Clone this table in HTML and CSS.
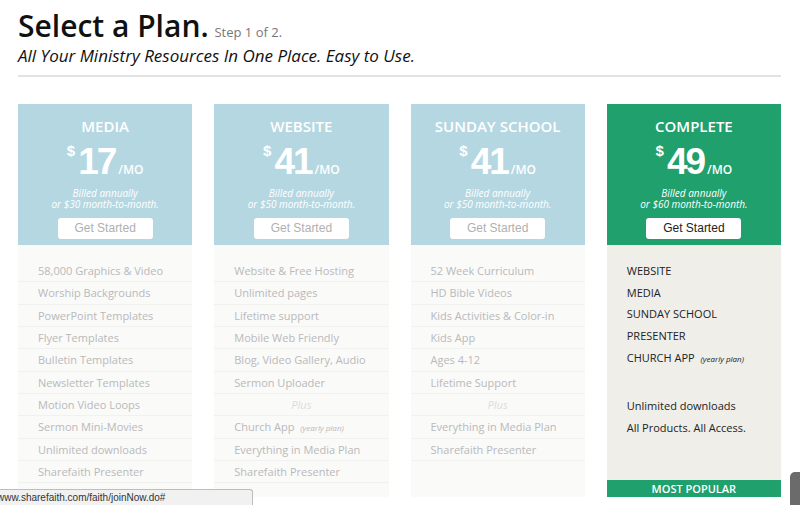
FILE: index.html
```html
<!DOCTYPE html>
<html lang="en">
<head>
    <meta charset="UTF-8">
    <title>Select a Plan</title>
    <link rel="stylesheet" href="styles.css">
</head>
<body>
    <div class="page">
        <h1 class="title">Select a Plan. <span class="step">Step 1 of 2.</span></h1>
        <p class="subtitle">All Your Ministry Resources In One Place. Easy to Use.</p>
        <hr class="rule">

        <div class="plans">
            <div class="plan">
                <div class="plan-head">
                    <h2>MEDIA</h2>
                    <div class="price"><span class="cur">$</span><span class="amt">17</span><span class="per">/MO</span></div>
                    <p class="billed">Billed annually<br>or $30 month-to-month.</p>
                    <a href="#" class="btn">Get Started</a>
                </div>
                <ul class="features">
                    <li>58,000 Graphics &amp; Video</li>
                    <li>Worship Backgrounds</li>
                    <li>PowerPoint Templates</li>
                    <li>Flyer Templates</li>
                    <li>Bulletin Templates</li>
                    <li>Newsletter Templates</li>
                    <li>Motion Video Loops</li>
                    <li>Sermon Mini-Movies</li>
                    <li>Unlimited downloads</li>
                    <li>Sharefaith Presenter</li>
                </ul>
            </div>

            <div class="plan">
                <div class="plan-head">
                    <h2>WEBSITE</h2>
                    <div class="price"><span class="cur">$</span><span class="amt">41</span><span class="per">/MO</span></div>
                    <p class="billed">Billed annually<br>or $50 month-to-month.</p>
                    <a href="#" class="btn">Get Started</a>
                </div>
                <ul class="features">
                    <li>Website &amp; Free Hosting</li>
                    <li>Unlimited pages</li>
                    <li>Lifetime support</li>
                    <li>Mobile Web Friendly</li>
                    <li>Blog, Video Gallery, Audio</li>
                    <li>Sermon Uploader</li>
                    <li class="plus">Plus</li>
                    <li>Church App <em class="note">(yearly plan)</em></li>
                    <li>Everything in Media Plan</li>
                    <li>Sharefaith Presenter</li>
                </ul>
            </div>

            <div class="plan">
                <div class="plan-head">
                    <h2>SUNDAY SCHOOL</h2>
                    <div class="price"><span class="cur">$</span><span class="amt">41</span><span class="per">/MO</span></div>
                    <p class="billed">Billed annually<br>or $50 month-to-month.</p>
                    <a href="#" class="btn">Get Started</a>
                </div>
                <ul class="features">
                    <li>52 Week Curriculum</li>
                    <li>HD Bible Videos</li>
                    <li>Kids Activities &amp; Color-in</li>
                    <li>Kids App</li>
                    <li>Ages 4-12</li>
                    <li>Lifetime Support</li>
                    <li class="plus">Plus</li>
                    <li>Everything in Media Plan</li>
                    <li>Sharefaith Presenter</li>
                </ul>
            </div>

            <div class="plan plan-complete">
                <div class="plan-head">
                    <h2>COMPLETE</h2>
                    <div class="price"><span class="cur">$</span><span class="amt">49</span><span class="per">/MO</span></div>
                    <p class="billed">Billed annually<br>or $60 month-to-month.</p>
                    <a href="#" class="btn">Get Started</a>
                </div>
                <ul class="features">
                    <li>WEBSITE</li>
                    <li>MEDIA</li>
                    <li>SUNDAY SCHOOL</li>
                    <li>PRESENTER</li>
                    <li>CHURCH APP <em class="note">(yearly plan)</em></li>
                    <li class="spacer"></li>
                    <li>Unlimited downloads</li>
                    <li>All Products. All Access.</li>
                </ul>
                <div class="popular">MOST POPULAR</div>
            </div>
        </div>
    </div>

    <div class="statusbar">www.sharefaith.com/faith/joinNow.do#</div>
    <div class="side-tab"></div>
</body>
</html>
```

FILE: styles.css
```css
body {
    margin: 0;
    font-family: "Open Sans", Arial, sans-serif;
    color: #111;
    background: #fff;
}
.page {
    padding: 8px 19px 0 18px;
}
.title {
    margin: 0;
    font-size: 30px;
    font-weight: 600;
    line-height: 36px;
    color: #111;
}
.step {
    font-size: 13px;
    font-weight: 400;
    line-height: 1;
    color: #777;
    margin-left: -2px;
}
.subtitle {
    margin: 0;
    font-size: 17px;
    font-style: italic;
    line-height: 24px;
    color: #111;
}
.rule {
    margin: 7px 0 0;
    border: 0;
    border-top: 2px solid #e2e2e2;
}
.plans {
    display: grid;
    grid-template-columns: repeat(4, 1fr);
    gap: 22px;
    margin-top: 27px;
}
.plan {
    height: 393px;
    display: flex;
    flex-direction: column;
    background: #fafaf9;
}
.plan-head {
    height: 141px;
    background: #b5d7e2;
    color: #fff;
    text-align: center;
    box-sizing: border-box;
    padding-top: 12px;
}
.plan-head h2 {
    margin: 0;
    font-size: 15px;
    font-weight: 600;
    line-height: 20px;
}
.price {
    margin-top: 9px;
    height: 34px;
    line-height: 34px;
    display: flex;
    justify-content: center;
    align-items: flex-start;
}
.cur {
    font-family: "Liberation Sans", Arial, sans-serif;
    font-weight: 700;
    font-size: 15px;
    line-height: 20px;
    margin-right: 3px;
    margin-top: -4px;
}
.amt {
    font-family: "Liberation Sans", Arial, sans-serif;
    font-weight: 700;
    font-size: 37px;
    line-height: 34px;
    letter-spacing: -2px;
}
.per {
    font-size: 12px;
    font-weight: 600;
    line-height: 12px;
    margin-top: 19px;
    margin-left: 3px;
}
.billed {
    margin: 9px 0 0;
    font-size: 10px;
    font-style: italic;
    line-height: 11px;
}
.btn {
    display: block;
    width: 95px;
    height: 21px;
    line-height: 21px;
    margin: 8px auto 0;
    background: #fff;
    border-radius: 3px;
    font-family: "Liberation Sans", Arial, sans-serif;
    font-size: 12px;
    color: #b0b0b0;
    text-decoration: none;
}
.features {
    list-style: none;
    margin: 0;
    padding: 15px 0 0;
    flex: 1;
}
.features li {
    height: 21.33px;
    line-height: 21.33px;
    border-bottom: 1px solid #f1f1ef;
    padding-left: 20px;
    font-size: 11px;
    color: #b9b9b9;
}
.features li.plus {
    padding-left: 0;
    text-align: center;
    font-style: italic;
    color: #dcdcdc;
}
.note {
    font-size: 8px;
    margin-left: 3px;
}

.plan-complete {
    background: #efeee9;
}
.plan-complete .plan-head {
    background: #1fa06d;
}
.plan-complete .btn {
    color: #222;
}
.plan-complete .features li {
    border: 0;
    height: 21.67px;
    line-height: 21.67px;
    color: #222;
}
.plan-complete .features li.spacer {
    height: 27px;
}
.popular {
    height: 17px;
    line-height: 17px;
    background: #1fa06d;
    color: #fff;
    text-align: center;
    font-size: 11px;
    font-weight: 600;
}

/* browser overlays */
.statusbar {
    position: fixed;
    left: 0;
    bottom: 0;
    width: 252px;
    height: 15px;
    line-height: 15px;
    background: #f1f1f1;
    border: 1px solid #bdbdbd;
    border-left: 0;
    border-bottom: 0;
    border-top-right-radius: 3px;
    font-family: "Liberation Sans", Arial, sans-serif;
    font-size: 10px;
    color: #333;
    white-space: nowrap;
    overflow: hidden;
    text-indent: -3px;
}
.side-tab {
    position: fixed;
    right: 0;
    bottom: 0;
    width: 10px;
    height: 33px;
    background: #6b6b6b;
    border-top-left-radius: 5px;
}
```
